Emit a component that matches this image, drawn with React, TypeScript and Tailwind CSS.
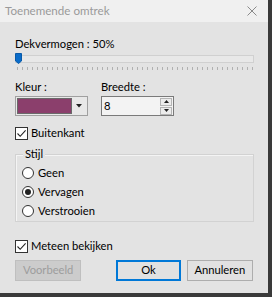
import React from "react";

const font = { fontFamily: 'Lato, "Noto Sans", sans-serif' };

function Check() {
  return (
    <div className="w-[13px] h-[13px] border border-[#333] bg-white flex items-center justify-center">
      <svg width="11" height="11" viewBox="0 0 11 11">
        <path d="M1.5 5.5 L4.2 8.3 L9.6 2.4" stroke="#222" strokeWidth="1.1" fill="none" />
      </svg>
    </div>
  );
}

function Radio({ on }: { on?: boolean }) {
  return (
    <div className="w-[12px] h-[12px] rounded-full border border-[#333] bg-white flex items-center justify-center">
      {on && <div className="w-[6px] h-[6px] rounded-full bg-[#222]" />}
    </div>
  );
}

export default function App() {
  const ticks = Array.from({ length: 48 }, (_, i) => i);
  return (
    <div className="w-[272px] h-[297px] bg-[#3a3a3a] text-[11.2px] text-black" style={font}>
      <div className="w-[268px] h-[293px] bg-[#e3e3e3] flex flex-col">
        <div className="h-[22px] bg-[#f0f0f0] flex items-center justify-between pl-[5px] pr-[11px]">
          <span className="text-[#9a9a9a] text-[11.6px] leading-none">Toenemende omtrek</span>
          <svg width="10" height="10" viewBox="0 0 10 10">
            <path d="M0.5 0.5 L9.5 9.5 M9.5 0.5 L0.5 9.5" stroke="#8a8a8a" strokeWidth="1" />
          </svg>
        </div>
        <div className="flex flex-col px-[15px] pt-[14px]">
          <div className="h-[16px] leading-[16px]">Dekvermogen : 50%</div>
          <div className="relative mt-[3px] w-[239px] h-[8px] bg-[#e8e8e8] border border-[#d0d0d0]">
            <svg className="absolute left-[-1px] top-[-3px]" width="7" height="11" viewBox="0 0 7 11">
              <path d="M0.5 0.5 H6.5 V8 L3.5 10.5 L0.5 8 Z" fill="#0a6cc9" stroke="#0a5aa8" strokeWidth="1" />
            </svg>
          </div>
          <div className="flex justify-between w-[236px] ml-[2px] mt-[4px] h-[3px]">
            {ticks.map((i) => (
              <div key={i} className="w-[1px] h-[3px] bg-[#b0b0b0]" />
            ))}
          </div>
          <div className="flex gap-[13px] mt-[9px]">
            <div className="flex flex-col">
              <div className="h-[16px] leading-[16px]">Kleur :</div>
              <div className="mt-[1px] w-[73px] h-[20px] border border-[#a0a0a0] bg-[#e8e8e8] flex items-center p-[1px]">
                <div className="w-[55px] h-full bg-[#8b3f6c] border border-[#6a6a6a]" />
                <div className="flex-1 h-full flex items-center justify-center">
                  <svg width="6" height="4" viewBox="0 0 6 4"><path d="M0 0 H6 L3 3.5 Z" fill="#222" /></svg>
                </div>
              </div>
            </div>
            <div className="flex flex-col">
              <div className="h-[16px] leading-[16px]">Breedte :</div>
              <div className="mt-[1px] w-[73px] h-[20px] border border-[#7a7a7a] bg-[#f3f3f3] flex items-center">
                <span className="pl-[2px] flex-1">8</span>
                <div className="flex flex-col w-[12px] mr-[1px] gap-[1px]">
                  <div className="h-[8px] border border-[#b5b5b5] bg-[#ececec] flex items-center justify-center">
                    <svg width="5" height="3" viewBox="0 0 5 3"><path d="M0 3 H5 L2.5 0 Z" fill="#222" /></svg>
                  </div>
                  <div className="h-[8px] border border-[#b5b5b5] bg-[#ececec] flex items-center justify-center">
                    <svg width="5" height="3" viewBox="0 0 5 3"><path d="M0 0 H5 L2.5 3 Z" fill="#222" /></svg>
                  </div>
                </div>
              </div>
            </div>
          </div>
          <div className="flex items-center gap-[3px] mt-[9px] h-[16px]">
            <Check />
            <span className="leading-[16px]">Buitenkant</span>
          </div>
          <div className="relative mt-[13px] w-[239px] h-[68px] border border-[#d2d2d2] shadow-[inset_1px_1px_0_#f4f4f4]">
            <span className="absolute left-[7px] top-[-9px] px-[2px] bg-[#e3e3e3] leading-[16px]">Stijl</span>
            <div className="flex flex-col pl-[6px] pt-[10px] gap-[3px]">
              <div className="flex items-center gap-[4px] h-[16px]"><Radio /><span>Geen</span></div>
              <div className="flex items-center gap-[4px] h-[16px]"><Radio on /><span>Vervagen</span></div>
              <div className="flex items-center gap-[4px] h-[16px]"><Radio /><span>Verstrooien</span></div>
            </div>
          </div>
          <div className="flex items-center gap-[3px] mt-[16px] h-[16px]">
            <Check />
            <span className="leading-[16px]">Meteen bekijken</span>
          </div>
          <div className="flex mt-[6px] h-[21px]">
            <div className="w-[67px] h-full bg-[#cccccc] border border-[#bfbfbf] text-[#9d9d9d] flex items-center justify-center">Voorbeeld</div>
            <div className="w-[65px] h-full ml-[35px] bg-[#e1e1e1] border-2 border-[#0078d7] flex items-center justify-center">Ok</div>
            <div className="w-[67px] h-full ml-[6px] bg-[#e1e1e1] border border-[#adadad] flex items-center justify-center">Annuleren</div>
          </div>
        </div>
      </div>
    </div>
  );
}
